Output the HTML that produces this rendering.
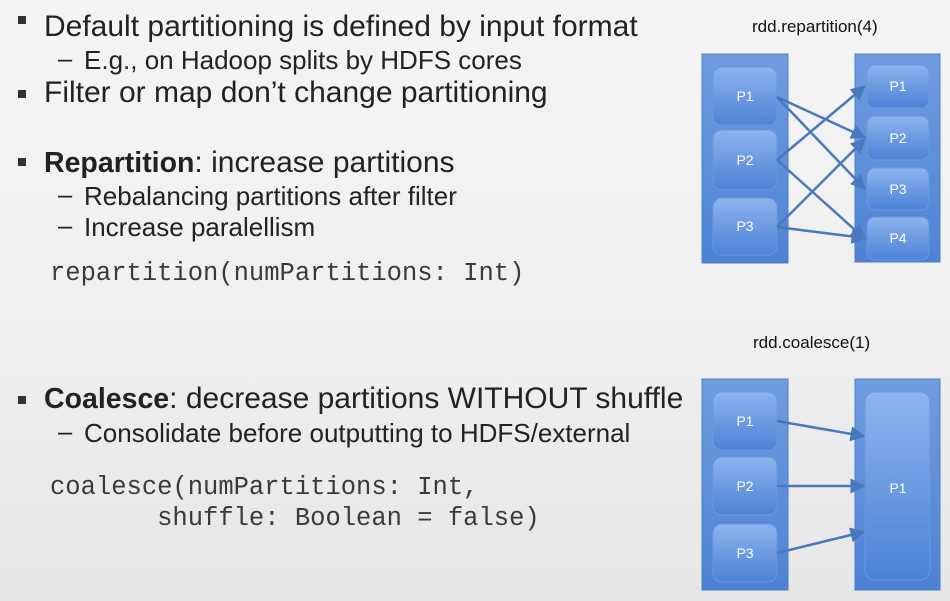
<!DOCTYPE html>
<html><head><meta charset="utf-8"><style>
html,body{margin:0;padding:0}
body{width:950px;height:601px;overflow:hidden;position:relative;background:linear-gradient(180deg,#f4f4f4 0%,#f0f0f0 50%,#e6e6e6 100%);font-family:"Liberation Sans",sans-serif;color:#222}
.t{position:absolute;white-space:nowrap;line-height:1}
.m{font-size:30px;left:44px}
.m b{font-size:28.5px}
.s{font-size:26px;left:84px}
.b{position:absolute;left:18px;width:8px;height:8px;background:#333}
.d{position:absolute;left:58px;font-size:25.5px}
.c{font-family:"Liberation Mono",monospace;font-size:25.5px;color:#3a3a3a;position:absolute;white-space:pre;line-height:31px}
.h{font-size:17px;color:#111}
</style></head><body>
<div class="b" style="top:16px"></div><div class="t m" style="top:12px">Default partitioning is defined by input format</div>
<div class="t d" style="top:47px">–</div><div class="t s" style="top:47px">E.g., on Hadoop splits by HDFS cores</div>
<div class="b" style="top:90px"></div><div class="t m" style="top:78px">Filter or map don’t change partitioning</div>
<div class="b" style="top:158px"></div><div class="t m" style="top:148px"><b>Repartition</b>: increase partitions</div>
<div class="t d" style="top:183px">–</div><div class="t s" style="top:183px">Rebalancing partitions after filter</div>
<div class="t d" style="top:214px">–</div><div class="t s" style="top:214px">Increase paralellism</div>
<div class="c" style="left:50px;top:258px">repartition(numPartitions: Int)</div>
<div class="b" style="top:396px"></div><div class="t m" style="top:384px"><b>Coalesce</b>: decrease partitions WITHOUT shuffle</div>
<div class="t d" style="top:420px">–</div><div class="t s" style="top:420px">Consolidate before outputting to HDFS/external</div>
<div class="c" style="left:50px;top:472px">coalesce(numPartitions: Int,
       shuffle: Boolean = false)</div>
<div class="t h" style="left:752px;top:18px">rdd.repartition(4)</div>
<div class="t h" style="left:753px;top:334px">rdd.coalesce(1)</div>
<svg width="950" height="601" style="position:absolute;left:0;top:0">
<defs>
<linearGradient id="col" x1="0" y1="0" x2="0" y2="1"><stop offset="0" stop-color="#6f9de0"/><stop offset="1" stop-color="#4d82d4"/></linearGradient>
<linearGradient id="bx" x1="0" y1="0" x2="0" y2="1"><stop offset="0" stop-color="#8db4ef"/><stop offset="1" stop-color="#4c82d6"/></linearGradient>
<marker id="ar" markerWidth="6" markerHeight="6" refX="5" refY="3" orient="auto"><path d="M0,0 L6,3 L0,6z" fill="#4a78bd"/></marker>
</defs>
<g stroke="#4e7ec4" stroke-width="1">
<rect x="702" y="54" width="86" height="209" fill="url(#col)"/>
<rect x="855" y="54" width="85" height="208" fill="url(#col)"/>
<rect x="702" y="379" width="86" height="211" fill="url(#col)"/>
<rect x="855" y="379" width="85" height="211" fill="url(#col)"/>
</g>
<g fill="url(#bx)" stroke="#6a98dc">
<rect x="713" y="67" width="64" height="58" rx="9"/>
<rect x="713" y="130" width="64" height="60" rx="9"/>
<rect x="713" y="198" width="64" height="57" rx="9"/>
<rect x="867" y="65" width="62" height="43" rx="8"/>
<rect x="867" y="116" width="62" height="44" rx="8"/>
<rect x="867" y="168" width="62" height="42" rx="8"/>
<rect x="867" y="217" width="62" height="43" rx="8"/>
<rect x="713" y="392" width="64" height="58" rx="9"/>
<rect x="713" y="457" width="64" height="58" rx="9"/>
<rect x="713" y="524" width="64" height="58" rx="9"/>
<rect x="865" y="392" width="65" height="188" rx="10"/>
</g>
<g stroke="#4a78bd" stroke-width="2.5" marker-end="url(#ar)" fill="none">
<line x1="777" y1="97" x2="864" y2="137"/>
<line x1="777" y1="97" x2="864" y2="188"/>
<line x1="777" y1="160" x2="864" y2="87"/>
<line x1="777" y1="160" x2="864" y2="238"/>
<line x1="777" y1="227" x2="864" y2="140"/>
<line x1="777" y1="227" x2="864" y2="238"/>
<line x1="777" y1="421" x2="863" y2="436"/>
<line x1="777" y1="486" x2="863" y2="486"/>
<line x1="777" y1="553" x2="863" y2="532"/>
</g>
<g font-family="Liberation Sans,sans-serif" font-size="14" fill="#fff" text-anchor="middle">
<text x="745" y="101">P1</text><text x="745" y="165">P2</text><text x="745" y="231">P3</text>
<text x="898" y="91">P1</text><text x="898" y="143">P2</text><text x="898" y="194">P3</text><text x="898" y="243">P4</text>
<text x="745" y="426">P1</text><text x="745" y="491">P2</text><text x="745" y="558">P3</text>
<text x="898" y="493">P1</text>
</g>
</svg>
</body></html>
